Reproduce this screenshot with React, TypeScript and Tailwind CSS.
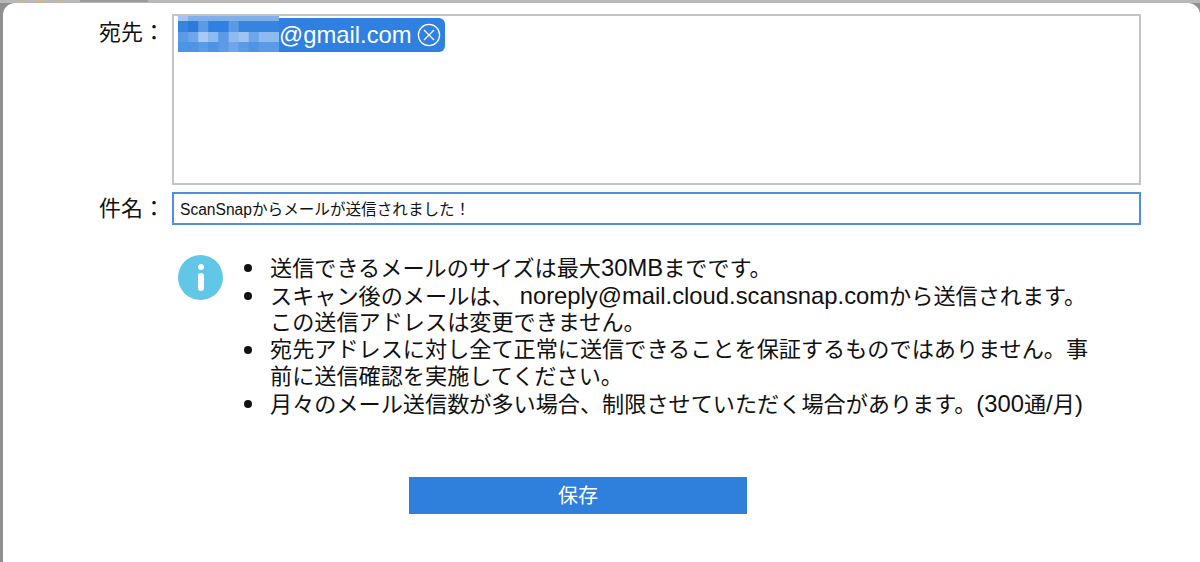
import React from 'react';

const notes = [
    '送信できるメールのサイズは最大30MBまでです。',
    'スキャン後のメールは、 noreply@mail.cloud.scansnap.comから送信されます。この送信アドレスは変更できません。',
    '宛先アドレスに対し全て正常に送信できることを保証するものではありません。事前に送信確認を実施してください。',
    '月々のメール送信数が多い場合、制限させていただく場合があります。(300通/月)',
];

// blurred out part of the address, uneven rows like the pixelated original
const mosaic = [
    ['#a3c6f0', '#7fb0ea', '#7fb0ea', '#7fb0ea', '#7fb0ea', '#7fb0ea', '#7fb0ea', '#7fb0ea', '#7fb0ea', '#7fb0ea'],
    ['#3585e0', '#2a7bdc', '#5a9ae6', '#2f80e0', '#2f80e0', '#5a9ae6', '#3585e0', '#3585e0', '#3585e0', '#3585e0'],
    ['#5a9ae6', '#6ea6ea', '#a8caf2', '#8fbaee', '#5a9ae6', '#8fbaee', '#a0c4f0', '#6ea6ea', '#8fbaee', '#8fbaee'],
    ['#4f94e4', '#4f94e4', '#5a9ae6', '#4f94e4', '#5a9ae6', '#6ea6ea', '#5a9ae6', '#4f94e4', '#5a9ae6', '#5a9ae6'],
];
const rowY = [0, 5, 16, 26];
const rowH = [5, 11, 10, 10];

const Mosaic = () => (
    <svg width="101" height="36" viewBox="0 0 101 36" className="shrink-0 -mt-[2px]">
        {mosaic.map((row, r) =>
            row.map((color, x) => <rect key={`${x}-${r}`} x={x * 10.1} y={rowY[r]} width="10.5" height={rowH[r]} fill={color} />)
        )}
    </svg>
);

// latin runs sit larger than the kana in the original font pairing
const NoteText = ({ text }: { text: string }) => (
    <span>
        {text.split(/([A-Za-z0-9@.()/]+)/).map((part, i) =>
            i % 2 ? <span key={i} className="text-[23.8px]">{part}</span> : part
        )}
    </span>
);

export default function App() {
    return (
        <div className="w-[1200px] h-[562px] overflow-hidden bg-[#8f8f8f] font-['Liberation_Sans','Noto_Sans_CJK_JP',sans-serif] text-[#111]">
            {/* sliver of the window behind the dialog */}
            <div className="h-[3px] bg-[#b9b9b9] flex items-start">
                <div className="ml-[19px] w-[5px] h-[1px] bg-[#e0b070]" />
                <div className="ml-[14px] w-[5px] h-[1px] bg-[#e0b070]" />
                <div className="ml-[14px] w-[5px] h-[1px] bg-[#e0b070]" />
                <div className="ml-[18px] w-[68px] h-[2px] bg-[#999]" />
            </div>
            <div className="ml-[3px] h-[559px] bg-white rounded-t-[12px] pt-[11px]">
                <div className="flex">
                    <div className="w-[162px] text-right text-[22px] leading-[38px]">宛先：</div>
                    <div className="w-[969px] h-[171px] border-2 border-[#c4c4c4] pt-[2px] pl-[4px] ml-[7px]">
                        <div className="inline-flex h-[34px] items-start rounded-r-[6px] bg-[#2f80e0] pr-[4px] text-[23.8px] leading-[34px] text-white">
                            <Mosaic />
                            <span>@gmail.com</span>
                            <svg className="ml-[5px] mt-[5px]" width="24" height="24" viewBox="0 0 24 24" fill="none" stroke="white" strokeWidth="1.3">
                                <circle cx="12" cy="12" r="10.6" />
                                <path d="M7 7 17 17M17 7 7 17" />
                            </svg>
                        </div>
                    </div>
                </div>
                <div className="flex mt-[7px]">
                    <div className="w-[162px] text-right text-[22px] leading-[34px]">件名：</div>
                    <div className="w-[969px] h-[33px] ml-[7px] border-2 border-[#4f8fdc] pl-[6px] text-[15.6px] leading-[32px]">ScanSnapからメールが送信されました！</div>
                </div>
                <div className="flex mt-[29px] ml-[175px]">
                    <div className="w-[45px] h-[45px] rounded-full bg-[#62c6e6] flex flex-col items-center justify-center shrink-0">
                        <div className="w-[6px] h-[6px] rounded-full bg-white" />
                        <div className="w-[6px] h-[18px] rounded-[3px] bg-white mt-[3px]" />
                    </div>
                    <ul className="ml-[21px] w-[850px] text-[22.15px] leading-[26.7px]">
                        {notes.map(n => (
                            <li key={n} className="flex">
                                <span className="w-[8px] h-[8px] rounded-full bg-[#111] mt-[9px] mr-[18px] shrink-0" />
                                <NoteText text={n} />
                            </li>
                        ))}
                    </ul>
                </div>
                <div className="mt-[59px] ml-[406px] w-[338px] h-[37px] bg-[#2e80dc] text-white text-[20px] flex items-center justify-center">保存</div>
            </div>
        </div>
    );
}
